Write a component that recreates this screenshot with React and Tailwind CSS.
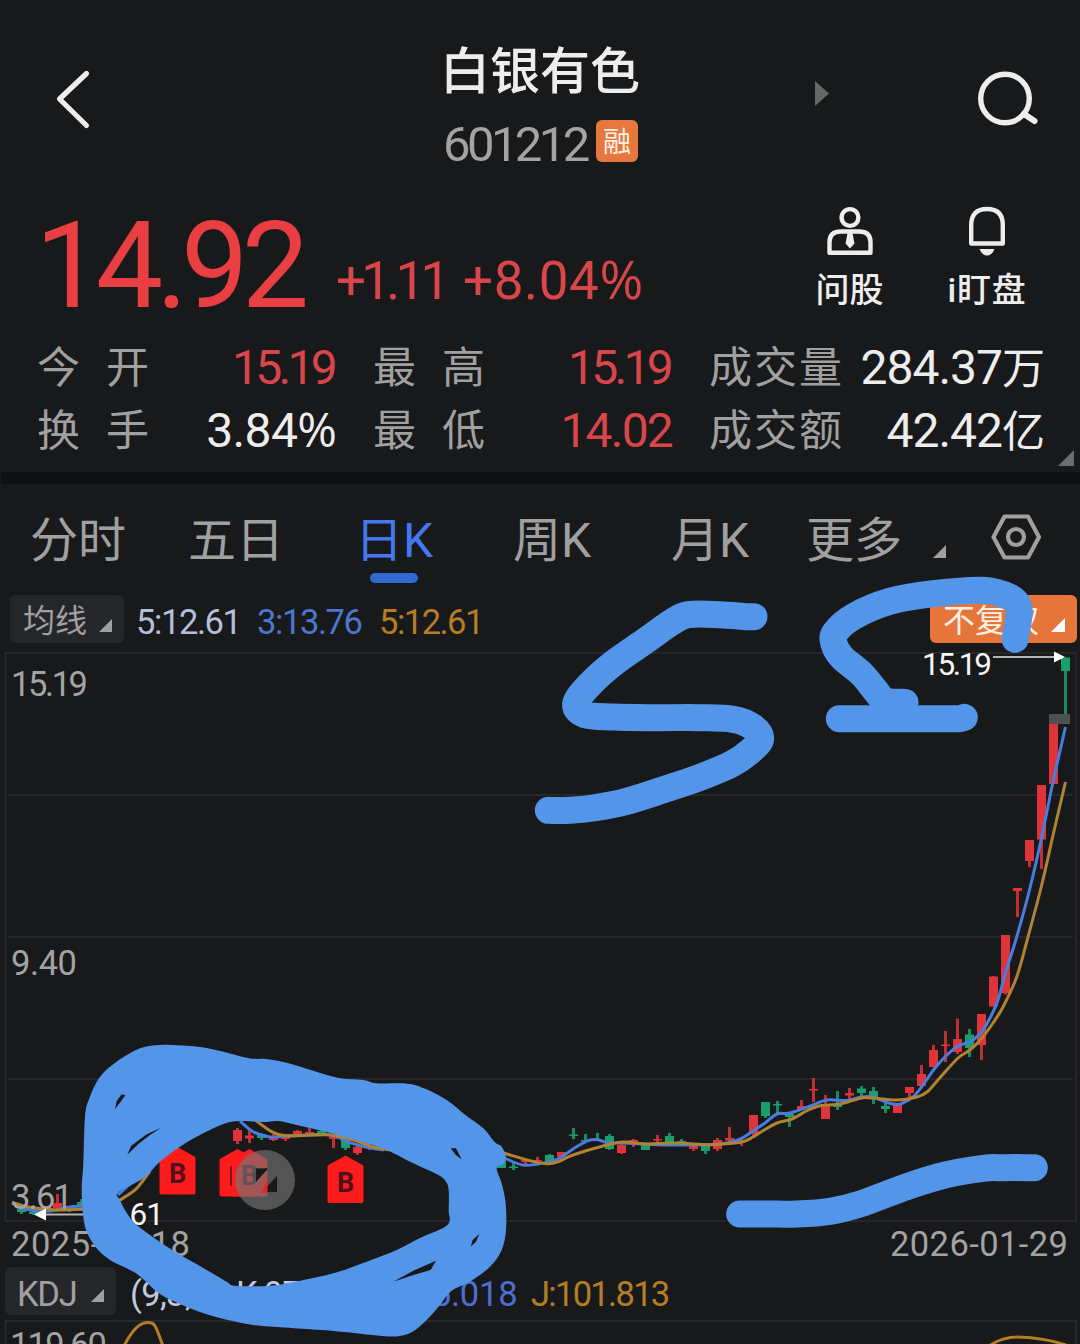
import React from "react";

const UP = "#df3439";
const DOWN = "#1a9e6c";
const INK = "#5395e9";
const FONT = "Roboto, 'Noto Sans CJK SC', sans-serif";

// x centre, high, body top, body bottom, low, rising
const candles = [
  [21.5, 1206, 1209, 1212, 1214, 0], [33.5, 1210, 1212, 1214, 1215, 0], [57.5, 1194, 1203, 1208, 1209, 1], [69.5, 1206, 1209, 1211, 1212, 0], [81.5, 1199, 1202, 1205, 1206, 0],
  [237.5, 1128, 1130, 1141, 1144, 1], [249.5, 1130, 1135.5, 1138.5, 1143, 1], [261.5, 1133, 1134, 1138, 1140, 0], [273.5, 1134, 1136, 1140, 1141, 1], [285.5, 1135, 1136, 1139, 1141, 1],
  [297.5, 1130, 1131, 1134, 1135, 1], [309.5, 1127, 1132, 1134, 1135, 1], [321.5, 1130, 1131, 1134, 1135, 0], [333.5, 1137, 1137, 1139, 1148, 1], [345.5, 1139, 1140, 1148, 1150, 0],
  [357.5, 1145, 1147, 1153, 1155, 1], [369.5, 1146, 1147, 1148.5, 1150, 1],
  [501.5, 1158, 1160, 1168, 1168, 0], [513.5, 1163, 1166.5, 1168, 1170, 0], [525.5, 1160, 1160, 1162, 1164, 1], [537.5, 1157, 1160, 1161, 1162, 1], [549.5, 1154, 1155, 1161, 1161, 0],
  [561.5, 1152, 1152, 1157, 1157, 1], [573.5, 1128, 1134.5, 1136, 1139, 0], [585.5, 1134, 1140, 1141.5, 1142, 0], [597.5, 1133, 1139, 1140.5, 1141, 0], [609.5, 1134, 1136, 1149, 1150, 0],
  [621.5, 1144, 1145, 1153, 1154, 1], [633.5, 1139, 1140, 1142, 1147, 1], [645.5, 1144, 1145, 1150, 1150, 0], [657.5, 1135, 1139, 1140.5, 1143, 1], [669.5, 1133, 1136, 1146, 1146, 0],
  [681.5, 1139, 1141, 1142.5, 1144, 0], [693.5, 1143, 1144, 1149, 1151, 1], [705.5, 1145, 1146, 1151, 1154, 0], [717.5, 1138, 1140, 1149, 1151, 1], [729.5, 1127, 1138, 1140.5, 1143, 1],
  [741.5, 1138, 1140, 1141, 1146, 1], [753.5, 1115, 1115, 1134, 1136, 1], [765.5, 1102, 1102, 1116, 1118, 0], [777.5, 1101, 1104, 1105.5, 1113, 0], [789.5, 1112, 1114, 1117, 1127, 0],
  [801.5, 1100, 1106, 1109, 1110, 1], [813.5, 1078, 1089, 1090.5, 1102, 1], [825.5, 1095, 1104, 1119, 1119, 1], [837.5, 1091, 1104, 1107, 1110, 0], [849.5, 1088, 1093, 1095.5, 1100, 1],
  [861.5, 1086, 1088.5, 1093, 1098, 0], [873.5, 1087, 1091, 1099, 1104, 0], [885.5, 1101, 1106, 1109, 1113, 0], [897.5, 1103, 1103, 1113, 1113, 1], [909.5, 1087, 1087, 1093, 1098, 1],
  [921.5, 1065, 1074, 1086, 1086, 1], [933.5, 1045, 1050, 1067, 1067, 1], [945.5, 1031, 1044.5, 1046, 1062, 1], [957.5, 1018.5, 1039, 1052, 1054, 1], [969.5, 1029, 1034.5, 1048, 1057, 0],
  [981.5, 1014, 1014, 1045, 1060, 1], [993.5, 976, 976.5, 1006.5, 1006.5, 1], [1005.5, 935, 935, 993, 994.5, 1], [1017.5, 888, 888, 891, 917, 1], [1029.5, 840, 840, 861, 867, 1],
  [1041.5, 785, 785, 839.5, 869, 1], [1053.5, 724, 724, 784, 784, 1], [1065.5, 657.5, 657.5, 671, 714, 0],
];

const blueLines = [
  [[12, 1203], [27, 1209.5], [50, 1211], [70, 1207], [86, 1206]],
  [[118, 1195], [130, 1184], [146, 1172]],
  [[240, 1121], [253, 1131.7], [270, 1137], [288, 1136], [330, 1134.7], [346.7, 1141.7], [366.7, 1147.3], [384, 1150]],
  [[496, 1152], [506.7, 1159], [525, 1165.3], [548, 1162], [560, 1158], [573, 1149], [588, 1140.7], [598, 1139.7], [608, 1143], [623, 1143], [670, 1145], [720, 1144], [740, 1139], [753, 1131], [765, 1123], [777, 1114], [790, 1113], [813, 1105], [827, 1100], [847, 1100.5], [861.5, 1097], [873, 1097], [887, 1102.5], [897, 1104.5], [903, 1103], [913, 1097], [921.5, 1087], [935, 1068], [947, 1055], [958, 1046], [967, 1043], [973, 1040], [982, 1031.5], [990, 1018], [998, 1000], [1005.7, 972], [1017, 936], [1030, 888], [1041.5, 838], [1053, 782], [1065.5, 727]],
];
const goldLines = [
  [[12, 1202.3], [30, 1207.3], [56.7, 1210], [86, 1209]],
  [[110, 1206], [120, 1200], [136.7, 1188.3], [150, 1171]],
  [[254, 1119], [271.7, 1131.7], [288, 1135.7], [326.7, 1134.7], [350, 1139], [373, 1146.7], [390, 1150]],
  [[494, 1150], [506.7, 1154], [530, 1160.7], [548, 1163.7], [560, 1161], [573, 1155], [603, 1146], [623, 1142], [647, 1144], [673, 1143], [707, 1144.7], [720, 1144.3], [742, 1142], [753, 1137], [763, 1130.7], [777, 1123], [792, 1119], [807, 1110.7], [820, 1105.7], [840, 1104], [861.7, 1098], [872, 1098], [897, 1100], [917, 1097], [927, 1092], [938, 1080], [958, 1058], [970, 1050], [982, 1038], [993, 1023], [1003, 1007], [1016.7, 977], [1028, 937], [1041.7, 885], [1054, 831], [1065.5, 782]],
];

// Strokes and outlines of the pen layer, each in its own local units.
const letterS = [[702, 140], [680, 140], [600, 134], [505, 134], [455, 157], [380, 210], [280, 280], [205, 348], [167, 402], [195, 434], [280, 441], [400, 443], [540, 443], [640, 448], [697, 470], [722, 505], [695, 540], [635, 582], [540, 622], [440, 656], [320, 694], [220, 714], [150, 721], [85, 721]];
const hook = [[645, 208], [655, 150], [656, 110], [630, 82], [550, 61], [400, 71], [270, 94], [160, 140], [105, 188], [102, 222], [126, 262], [185, 312], [225, 360], [255, 392], [315, 397]];
const wave = [[59, 522], [140, 522], [230, 522], [330, 514], [420, 492], [560, 440], [680, 404], [790, 385], [850, 383], [943, 383]];
const ringOuter = [[250, 400], [255, 260], [268, 205], [300, 140], [350, 95], [420, 55], [480, 45], [530, 46], [620, 54], [745, 84], [800, 87], [860, 98], [940, 122], [1012, 143], [1090, 150], [1130, 160], [1220, 161], [1270, 174], [1340, 210], [1400, 258], [1450, 295], [1485, 337], [1505, 350], [1517, 378], [1509, 403], [1490, 415], [1505, 460], [1517, 520], [1518, 600], [1505, 660], [1470, 710], [1410, 755], [1355, 782], [1320, 825], [1280, 870], [1240, 904], [1200, 918], [1145, 918], [1000, 903], [800, 889], [730, 880], [620, 853], [520, 813], [470, 785], [430, 748], [400, 725], [330, 690], [290, 655], [262, 610], [250, 560], [245, 480]];
const ringInner = [[355, 487], [360, 510], [375, 540], [400, 575], [450, 615], [520, 662], [600, 708], [680, 755], [705, 767], [810, 767], [900, 752], [1000, 730], [1100, 695], [1190, 660], [1260, 624], [1342, 585], [1346, 540], [1346, 480], [1338, 455], [1315, 435], [1240, 400], [1160, 360], [1100, 340], [980, 306], [890, 285], [835, 273], [790, 276], [720, 273], [670, 282], [600, 315], [540, 350], [480, 395], [430, 445]];
const slits = "M365 193L376 196L362 215L345 238L350 213ZM382 374L393 348L440 313L482 294L450 315L415 342ZM1352 355L1368 355L1385 388L1368 376ZM1412 650L1418 630L1438 612L1428 635ZM1180 755L1240 722L1308 692L1292 720L1240 735Z";

function curve(points, closed = false) {
  const n = points.length;
  const at = (i) => (closed ? points[(i + n) % n] : points[Math.max(0, Math.min(n - 1, i))]);
  let d = `M${points[0]}`;
  for (let i = 0; i < (closed ? n : n - 1); i++) {
    const [a, b, c, e] = [at(i - 1), at(i), at(i + 1), at(i + 2)];
    d += `C${b[0] + (c[0] - a[0]) / 6} ${b[1] + (c[1] - a[1]) / 6} ${c[0] - (e[0] - b[0]) / 6} ${c[1] - (e[1] - b[1]) / 6} ${c[0]} ${c[1]}`;
  }
  return closed ? d + "Z" : d;
}

function Corner({ className }) {
  return (
    <svg viewBox="0 0 14 14" className={className}>
      <path d="M14 0V14H0Z" fill="currentColor" />
    </svg>
  );
}

function Percent() {
  return <span className="font-['Open_Sans'] leading-none tracking-normal">%</span>;
}

function Header() {
  return (
    <header className="grid h-[190px] grid-cols-[440px_200px_440px]">
      <svg viewBox="0 0 40 64" className="mt-[67px] ml-[54px] h-16 w-10" fill="none" stroke="#ededed" strokeWidth="5.2" strokeLinecap="round" strokeLinejoin="round">
        <path d="M32.500 6.500L5.500 32L32.500 58.500" />
      </svg>
      <div className="flex flex-col pt-[44px]">
        <h1 className="text-[50px] leading-[56px] font-medium whitespace-nowrap text-[#ededed]">白银有色</h1>
        <div className="mt-[17px] flex h-[56px] items-center pl-[3px]">
          <span className="w-[153px] text-[49px] leading-[56px] tracking-[-3.600px] text-[#a3a3a3]">601212</span>
          <span className="mb-[8px] flex h-[42px] w-[42px] shrink-0 items-center justify-center rounded-[6px] bg-[#e6783f] pt-[4px] text-[28px] leading-none text-[#fff1e6]">融</span>
        </div>
      </div>
      <div className="flex">
        <svg viewBox="0 0 14 25" className="mt-[81px] ml-[175px] h-[25px] w-[14px]">
          <path d="M0 0L14 12.500L0 25Z" fill="#666768" />
        </svg>
        <svg viewBox="0 0 64 60" className="mt-[70px] ml-[147px] h-[60px] w-16" fill="none" stroke="#ededed" strokeWidth="5.400">
          <circle cx="29" cy="28.500" r="24.300" />
          <path d="M48 44L58.500 51" strokeWidth="6" strokeLinecap="round" />
        </svg>
      </div>
    </header>
  );
}

function Price() {
  return (
    <section className="flex h-[146px] justify-between pr-[45px] pl-[35px]">
      <div className="flex h-[140px] items-start pt-[16px] text-[#e93e42]">
        <span className="w-[301px] text-[120px] leading-[120px] tracking-[-6.800px]">14.92</span>
        <span className="mt-[45px] w-[127px] text-[53px] leading-[60px] tracking-[-4.800px] text-[#d8464a]">+1.11</span>
        <span className="mt-[45px] text-[53px] leading-[60px] tracking-[0.600px] text-[#d8464a]">+8.04<Percent /></span>
      </div>
      <div className="flex gap-[40px] pt-[16px] text-[34px] leading-[48px] font-medium text-[#ededed]">
        <div className="flex w-[97px] flex-col items-center">
          <svg viewBox="0 0 46 50" className="h-[50px] w-[46px]" fill="none" stroke="#ededed" strokeWidth="4.400">
            <circle cx="23" cy="11.500" r="8.400" />
            <path d="M2.500 46.700V36Q2.500 25.500 14 25.500H32Q43.500 25.500 43.500 36V46.700Z" strokeLinejoin="round" />
            <path d="M20.500 27H25.500L27.500 37.500L23 42.500L18.500 37.500Z" fill="#ededed" stroke="none" />
          </svg>
          <span className="mt-[10px]">问股</span>
        </div>
        <div className="flex w-[97px] flex-col items-center pl-[1px]">
          <svg viewBox="0 0 46 50" className="h-[50px] w-[46px]" fill="none" stroke="#ededed" strokeWidth="4.400">
            <path d="M7.200 37.500V19Q7.200 3 23 3Q38.800 3 38.800 19V37.500Z" strokeLinejoin="round" />
            <path d="M15.500 43H30.500Q28 49.500 23 49.500Q18 49.500 15.500 43Z" fill="#ededed" stroke="none" />
          </svg>
          <span className="mt-[10px] tracking-[0.800px] whitespace-nowrap">i盯盘</span>
        </div>
      </div>
    </section>
  );
}

function Stat({ label, children, className }) {
  return (
    <div className="flex h-[63px] items-center justify-between text-[48px] leading-[63px] whitespace-nowrap">
      <span className="flex w-[112px] justify-between pt-[2px] text-[43px] text-[#a0a0a0]">{label.split("").map((c) => <span key={c}>{c}</span>)}</span>
      <span className={className}>{children}</span>
    </div>
  );
}

function Stats() {
  return (
    <section className="flex h-[136px] pl-[37px]">
      <div className="w-[300px]">
        <Stat label="今开" className="mr-[3px] tracking-[-3.700px] text-[#d8464a]">15.19</Stat>
        <Stat label="换手" className="tracking-[-0.600px] text-[#ededed]">3.84<Percent /></Stat>
      </div>
      <div className="ml-[36px] w-[300px]">
        <Stat label="最高" className="mr-[3px] tracking-[-3.700px] text-[#d8464a]">15.19</Stat>
        <Stat label="最低" className="mr-[1px] tracking-[-1.800px] text-[#d8464a]">14.02</Stat>
      </div>
      <div className="ml-[36px] w-[335px] text-[48px] leading-[63px] whitespace-nowrap text-[#ededed]">
        <div className="flex h-[63px] items-center justify-between">
          <span className="pt-[2px] text-[43px] tracking-[2px] text-[#a0a0a0]">成交量</span>
          <span className="pt-[2px] tracking-[-1px]">284.37<span className="text-[43px]">万</span></span>
        </div>
        <div className="flex h-[63px] items-center justify-between">
          <span className="pt-[2px] text-[43px] tracking-[2px] text-[#a0a0a0]">成交额</span>
          <span className="pt-[2px] tracking-[-1px]">42.42<span className="text-[43px]">亿</span></span>
        </div>
      </div>
      <Corner className="mt-[114px] ml-[14px] h-4 w-4 text-[#6b6c6d]" />
    </section>
  );
}

function Tabs() {
  return (
    <nav className="flex h-[111px] items-start pt-[25px] pl-[30px] text-[48px] leading-[64px] whitespace-nowrap text-[#a0a0a0]">
      <span className="w-[158px]">分时</span>
      <span className="w-[167px]">五日</span>
      <span className="flex w-[158px] flex-col text-[#4478ef]">
        日K
        <span className="ml-[15px] h-[10px] w-12 rounded-full bg-[#3168d2]" />
      </span>
      <span className="w-[158px]">周K</span>
      <span className="w-[135px]">月K</span>
      <span className="w-[127px]">更多</span>
      <Corner className="mt-[36px] h-[13px] w-[13px]" />
      <svg viewBox="0 0 50 46" className="mt-[5px] ml-[45px] h-[46px] w-[50px]" fill="none" stroke="#a0a0a0" strokeWidth="4.200">
        <path d="M13.500 2.500H37L48 23L37 43.500H13.500L2.500 23Z" strokeLinejoin="round" />
        <circle cx="25" cy="23" r="8" />
      </svg>
    </nav>
  );
}

function Averages() {
  return (
    <div className="flex h-[48px] items-center pr-[3px] pl-[10px] text-[34.500px] leading-[48px] whitespace-nowrap">
      <span className="flex h-[48px] w-[114px] items-center rounded-[6px] bg-[#25262a] pt-[4px] pl-[13px] text-[32px] text-[#a0a0a0]">
        均线
        <Corner className="mt-[8px] ml-3 h-[13px] w-[13px]" />
      </span>
      <span className="ml-3 w-[121px] pt-[5px] tracking-[-1.400px] text-[#b4bfdc]">5:12.61</span>
      <span className="w-[122px] pt-[5px] tracking-[-1.400px] text-[#4d76d0]">3:13.76</span>
      <span className="w-[120px] pt-[5px] tracking-[-1.500px] text-[#b57d24]">5:12.61</span>
      <span className="ml-auto flex h-[48px] w-[147px] items-center rounded-[6px] bg-[#e6753c] pt-[4px] pl-[13px] text-[32px] text-[#fff0e4]">
        不复权
        <Corner className="mt-[8px] ml-[12px] h-[14px] w-[14px] text-white" />
      </span>
    </div>
  );
}

function Marker({ x, y, label = "B" }) {
  return (
    <g transform={`translate(${x} ${y})`}>
      <path d="M18 0L35 9.500Q36 10 36 11.500V45.500Q36 47.500 34 47.500H2Q0 47.500 0 45.500V11.500Q0 10 1 9.500Z" fill="#fd1b1b" />
      <text x="18" y="36" textAnchor="middle" fontSize="27" fontWeight="700" fill="#520f1c">{label}</text>
    </g>
  );
}

function Label({ x, y, w, size = 34.5, fill = "#a3a3a3", children }) {
  return <text x={x} y={y} textLength={w} lengthAdjust="spacing" fontSize={size} fill={fill}>{children}</text>;
}

function Chart() {
  return (
    <svg viewBox="0 643 1080 624" className="block h-[624px] w-[1080px]" fontFamily={FONT}>
      <rect x="5.500" y="653" width="1070.500" height="568" fill="none" stroke="#28292b" strokeWidth="1.800" />
      <path d="M8 795H1073M8 937H1073M8 1079H1073" stroke="#2c2d2f" strokeWidth="1.500" />
      {candles.map(([x, high, top, bottom, low, up]) => (
        <g key={x} fill={up ? UP : DOWN}>
          <rect x={x - 1.5} y={high} width="3" height={low - high} opacity="0.85" />
          <rect x={x - 4.5} y={top} width="9" height={Math.max(1.5, bottom - top)} />
        </g>
      ))}
      <rect x="1049" y="714" width="21" height="10" fill="#4f5052" />
      <g fill="none" strokeWidth="3" strokeLinejoin="round">
        {blueLines.map((p) => <path key={p[0][0]} d={curve(p)} stroke="#4a7ce0" />)}
        {goldLines.map((p) => <path key={p[0][0]} d={curve(p)} stroke="#b08233" />)}
      </g>
      <Label x={11} y={696} w={77}>15.19</Label>
      <Label x={11} y={975} w={66}>9.40</Label>
      <Label x={11} y={1209} w={62}>3.61</Label>
      <Label x={922} y={675} w={70} size={31.5} fill="#f5f5f5">15.19</Label>
      <Label x={105} y={1224.5} w={59} size={31.5} fill="#f5f5f5">3.61</Label>
      <path d="M993 657H1056M44 1214.500H106" stroke="#b5b5b5" strokeWidth="1.800" />
      <path d="M1054 651.500L1065 657L1054 662.500ZM46 1208.500L34 1214.500L46 1220.500Z" fill="#fff" />
      <Label x={11} y={1256} w={179}>2025-09-18</Label>
      <Label x={890} y={1256} w={178}>2026-01-29</Label>
      <Marker x={159.5} y={1147} />
      <Marker x={219.5} y={1149} label="" />
      <Marker x={231.5} y={1149} />
      <path d="M231 1166V1186" stroke="#7d1320" strokeWidth="2" />
      <Marker x={327.5} y={1155.5} />
      <path d="M253 1168H269L253 1184ZM261.500 1192.500H277V1176Z" fill="#181516" />
      <circle cx="265" cy="1180" r="30" fill="#747474" fillOpacity="0.650" />
      <path d="M256 1168.500H268L256 1182ZM262 1192H277V1176Z" fill="#1b1819" />
      <path d="M262 1192H267.500V1179Z" fill="#ed2024" />
    </svg>
  );
}

function Kdj() {
  return (
    <section>
      <div className="flex h-[48px] items-center pl-[5px] text-[34.500px] leading-[48px] whitespace-nowrap">
        <span className="flex h-[48px] w-[111px] items-center rounded-[6px] bg-[#25262a] pt-[5px] pl-[12px] tracking-[-1.300px] text-[#a0a0a0]">
          KDJ
          <Corner className="mt-[4px] ml-[15px] h-[13px] w-[13px]" />
        </span>
        <span className="ml-[14px] w-[106px] pt-[6px] tracking-[-0.600px] text-[#c1c8dc]">(9,3,3)</span>
        <span className="w-[146px] pt-[6px] tracking-[-1px] text-[#c1c8dc]">K:97.283</span>
        <span className="w-[149px] pt-[6px] tracking-[-0.200px] text-[#4d6fd0]">D:95.018</span>
        <span className="pt-[6px] tracking-[-1.700px] text-[#b57d24]">J:101.813</span>
      </div>
      <svg viewBox="0 1315 1080 29" className="block h-[29px] w-[1080px]" fontFamily={FONT}>
        <path d="M5.500 1344V1321H1076V1344" fill="none" stroke="#28292b" strokeWidth="1.800" />
        <Label x={10} y={1357} w={97}>119.60</Label>
        <g fill="none" stroke="#b57d24" strokeWidth="3">
          <path d="M124 1346C130 1334 138 1323 147 1322.500C155 1322 155 1324 163 1346" />
          <path d="M989 1346C999 1339 1007 1337 1018 1337C1035 1337.500 1054 1341 1066 1345" />
        </g>
      </svg>
    </section>
  );
}

function PenLayer() {
  return (
    <svg viewBox="0 0 1080 1344" className="pointer-events-none absolute inset-0 h-[1344px] w-[1080px]" fill="none" stroke={INK} strokeWidth="81" strokeLinecap="round" strokeLinejoin="round">
      <path d={curve(letterS)} transform="translate(520 570) scale(.33333)" />
      <g transform="translate(800 570) scale(.33333)">
        <path d={curve(hook)} />
        <path d="M118 446H480L493 442" />
      </g>
      <path d={curve(wave)} transform="translate(720 1040) scale(.33333)" />
      <path d={curve(ringOuter, true) + curve(ringInner, true) + slits} transform="translate(0 1030) scale(.33333)" fill={INK} fillRule="evenodd" stroke="none" />
    </svg>
  );
}

export default function App() {
  return (
    <main className="relative h-[1344px] w-[1080px] overflow-hidden bg-[#18191a] font-[Roboto,'Noto_Sans_CJK_SC',sans-serif]">
      <Header />
      <Price />
      <Stats />
      <div className="ml-px h-3 bg-[#0f1012]" />
      <Tabs />
      <Averages />
      <Chart />
      <Kdj />
      <PenLayer />
    </main>
  );
}
